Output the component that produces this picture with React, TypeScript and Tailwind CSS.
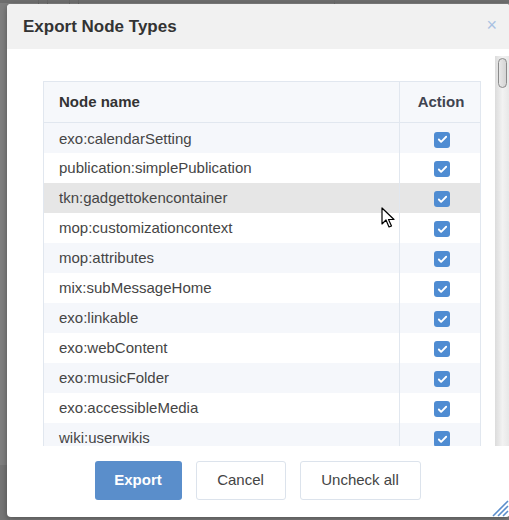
import { Check } from "lucide-react";

const nodeTypes = [
  "exo:calendarSetting",
  "publication:simplePublication",
  "tkn:gadgettokencontainer",
  "mop:customizationcontext",
  "mop:attributes",
  "mix:subMessageHome",
  "exo:linkable",
  "exo:webContent",
  "exo:musicFolder",
  "exo:accessibleMedia",
  "wiki:userwikis",
  "exo:taxonomy",
];

const HOVER_ROW = 2;

function CheckBox() {
  return (
    <span className="inline-flex items-center justify-center w-[16px] h-[16px] rounded-[3px] bg-[#4f8cd2]">
      <Check className="size-[11px] text-white" strokeWidth={4} />
    </span>
  );
}

function NodeTable() {
  return (
    <table className="w-[438px] border-collapse border border-[#e1e7ef] text-[15px] text-[#454545]">
      <thead>
        <tr className="h-[41px] bg-[#f6f8fb]">
          <th className="text-left font-bold text-[#333] pl-[15px] border-b border-[#e1e7ef]">
            Node name
          </th>
          <th className="w-[81px] font-bold text-[#3f4450] pl-[2px] border-l border-b border-[#e1e7ef]">
            Action
          </th>
        </tr>
      </thead>
      <tbody>
        {nodeTypes.map((name, i) => (
          <tr
            key={name}
            className={
              i === HOVER_ROW
                ? "h-[30px] bg-[#e6e6e6]"
                : i % 2 === 0
                  ? "h-[30px] bg-[#f5f7fb]"
                  : "h-[30px] bg-white"
            }
          >
            <td className="pl-[15px] pt-[2px]">{name}</td>
            <td className="text-center border-l border-[#e1e7ef] pt-[5px] pl-[4px]">
              <CheckBox />
            </td>
          </tr>
        ))}
      </tbody>
    </table>
  );
}

function Cursor() {
  return (
    <svg
      className="absolute left-[381px] top-[207px]"
      width="14"
      height="22"
      viewBox="0 0 14 22"
    >
      <path
        d="M1 1 L1 17 L5 13 L8 20 L10.5 19 L7.5 12.5 L13 12.5 Z"
        fill="white"
        stroke="black"
        strokeWidth="1.2"
        strokeLinejoin="round"
      />
    </svg>
  );
}

export default function App() {
  return (
    <div
      className="relative w-[509px] h-[520px] overflow-hidden bg-[#7f7f7f]"
      style={{ fontFamily: '"Liberation Sans", Arial, sans-serif' }}
    >
      {/* page behind the overlay */}
      <div className="absolute left-0 top-0 w-full h-[3px] bg-[#6e6e6e]" />
      <div className="absolute left-[38px] top-0 w-px h-[6px] bg-[#666]" />
      <div className="absolute left-[47px] top-0 w-px h-[6px] bg-[#666]" />
      <div className="absolute left-[69px] top-0 w-px h-[6px] bg-[#666]" />
      <div className="absolute left-[78px] top-0 w-px h-[6px] bg-[#666]" />
      <div className="absolute left-[334px] top-0 w-px h-[6px] bg-[#6a6a6a]" />
      <div className="absolute left-0 top-[465px] w-[10px] h-[55px] bg-[#757575]" />

      <div className="absolute left-[7px] top-[4px] w-[503px] h-[513px] rounded-[4px] bg-white shadow-[0_2px_6px_rgba(0,0,0,0.35)] flex flex-col overflow-hidden">
        <div className="h-[45px] shrink-0 bg-[#f1f1f1] flex items-center justify-between pl-[16px] pr-[13px]">
          <h2 className="text-[17px] font-bold text-[#333]">Export Node Types</h2>
          <span className="text-[18px] leading-none text-[#a9c1e2] -mt-[4px]">×</span>
        </div>

        <div className="mt-[7px] h-[390px] shrink-0 flex">
          <div className="flex-1 overflow-hidden pl-[36px] pt-[25px]">
            <NodeTable />
          </div>
          <div className="w-[15px] h-full bg-gradient-to-r from-[#dcdcdc] via-[#f2f2f2] to-[#e6e6e6] pt-[2px] flex justify-center">
            <div className="w-[9px] h-[30px] rounded-full border border-[#8a8a8a] bg-gradient-to-r from-[#e8e8e8] to-[#d4d4d4]" />
          </div>
        </div>

        <div className="flex justify-center gap-[14px] pt-[15px] pr-[2px]">
          <button
            type="button"
            className="w-[87px] h-[39px] rounded-[3px] bg-[#5a8ecb] text-white text-[15px] font-bold"
          >
            Export
          </button>
          <button
            type="button"
            className="w-[90px] h-[39px] rounded-[3px] border border-[#dce3ec] bg-white text-[#444] text-[15px]"
          >
            Cancel
          </button>
          <button
            type="button"
            className="w-[121px] h-[39px] rounded-[3px] border border-[#dce3ec] bg-white text-[#444] text-[15px]"
          >
            Uncheck all
          </button>
        </div>

        <svg
          className="absolute right-[1px] bottom-0"
          width="20"
          height="20"
          viewBox="0 0 20 20"
        >
          <path d="M4 19 L19 4 M9 19 L19 9 M14 19 L19 14" stroke="#5b8ecc" strokeWidth="1.6" />
        </svg>
      </div>

      <Cursor />
    </div>
  );
}
